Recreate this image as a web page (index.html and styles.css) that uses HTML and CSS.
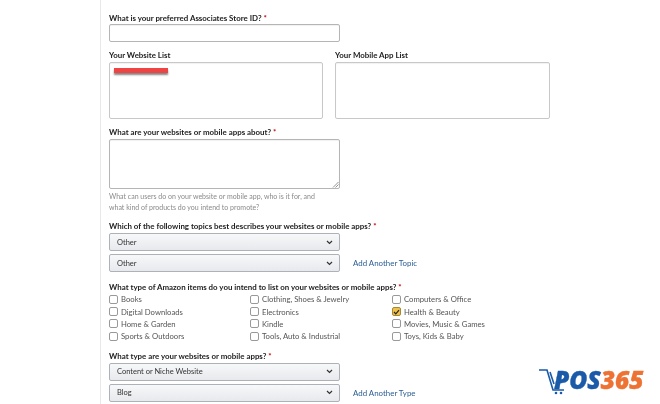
FILE: index.html
```html
<!DOCTYPE html>
<html lang="en">
<head>
  <meta charset="UTF-8" />
  <title>Associates Profile</title>
  <link rel="stylesheet" href="styles.css">
</head>
<body>
  <div class="form">

    <div class="label">What is your preferred Associates Store ID? <span class="req">*</span></div>
    <div class="box store-id"></div>

    <div class="lists">
      <div>
        <div class="label">Your Website List</div>
        <div class="box list-box"><span class="redacted"></span></div>
      </div>
      <div>
        <div class="label">Your Mobile App List</div>
        <div class="box list-box"></div>
      </div>
    </div>

    <div class="label section">What are your websites or mobile apps about? <span class="req">*</span></div>
    <div class="box about">
      <svg class="grip" width="7" height="7" viewBox="0 0 7 7"><path d="M1 6.5 6.5 1M3.5 6.5 6.5 3.5" stroke="#777" stroke-width="0.8" fill="none"/></svg>
    </div>
    <p class="hint">What can users do on your website or mobile app, who is it for, and<br>what kind of products do you intend to promote?</p>

    <div class="label section">Which of the following topics best describes your websites or mobile apps? <span class="req">*</span></div>
    <div class="select-row">
      <div class="select">Other <svg class="chev" width="7" height="5" viewBox="0 0 7 5"><path d="M1 1 3.5 3.5 6 1" stroke="#333" stroke-width="1.2" fill="none"/></svg></div>
    </div>
    <div class="select-row">
      <div class="select">Other <svg class="chev" width="7" height="5" viewBox="0 0 7 5"><path d="M1 1 3.5 3.5 6 1" stroke="#333" stroke-width="1.2" fill="none"/></svg></div>
      <a class="add" href="#">Add Another Topic</a>
    </div>

    <div class="label section-items">What type of Amazon items do you intend to list on your websites or mobile apps? <span class="req">*</span></div>
    <div class="checks">
      <label class="check"><span class="tick"></span>Books</label>
      <label class="check"><span class="tick"></span>Clothing, Shoes &amp; Jewelry</label>
      <label class="check"><span class="tick"></span>Computers &amp; Office</label>
      <label class="check"><span class="tick"></span>Digital Downloads</label>
      <label class="check"><span class="tick"></span>Electronics</label>
      <label class="check"><span class="tick on"><svg width="7" height="6" viewBox="0 0 7 6"><path d="M1 3 2.8 4.8 6 1.2" stroke="#222" stroke-width="1.2" fill="none"/></svg></span>Health &amp; Beauty</label>
      <label class="check"><span class="tick"></span>Home &amp; Garden</label>
      <label class="check"><span class="tick"></span>Kindle</label>
      <label class="check"><span class="tick"></span>Movies, Music &amp; Games</label>
      <label class="check"><span class="tick"></span>Sports &amp; Outdoors</label>
      <label class="check"><span class="tick"></span>Tools, Auto &amp; Industrial</label>
      <label class="check"><span class="tick"></span>Toys, Kids &amp; Baby</label>
    </div>

    <div class="label section">What type are your websites or mobile apps? <span class="req">*</span></div>
    <div class="select-row">
      <div class="select">Content or Niche Website <svg class="chev" width="7" height="5" viewBox="0 0 7 5"><path d="M1 1 3.5 3.5 6 1" stroke="#333" stroke-width="1.2" fill="none"/></svg></div>
    </div>
    <div class="select-row">
      <div class="select">Blog <svg class="chev" width="7" height="5" viewBox="0 0 7 5"><path d="M1 1 3.5 3.5 6 1" stroke="#333" stroke-width="1.2" fill="none"/></svg></div>
      <a class="add" href="#">Add Another Type</a>
    </div>

  </div>

  <!-- watermark -->
  <div class="logo">
    <svg width="25" height="28" viewBox="0 0 25 28"><path d="M0 3H8L14 23H25" stroke="#1a5aa8" stroke-width="1.6" fill="none"/><path d="M11 5 15 17" stroke="#1a5aa8" stroke-width="1.6" fill="none"/><circle cx="17" cy="26" r="1.3" fill="#1a5aa8"/><circle cx="22" cy="26" r="1.3" fill="#1a5aa8"/></svg>
    <span class="logo-pos">POS</span><span class="logo-num">365</span>
  </div>
</body>
</html>
```

FILE: styles.css
```css
body {
  margin: 0;
  height: 404px;
  overflow: hidden;
  background: #fff;
  font-family: "Lato", "Liberation Sans", sans-serif;
  font-size: 7.9px;
  color: #444;
  filter: blur(0.3px);
}
.form {
  margin-left: 100px;
  height: 391px;
  padding: 13px 0 0 8px;
  border-left: 1px solid #e8e8e8;
}
.label {
  height: 10px;
  line-height: 10px;
  font-weight: 700;
  color: #222;
  white-space: nowrap;
}
.req {
  color: #c40000;
}
.section {
  margin-top: 8px;
}
.section-items {
  margin-top: 10px;
}
.box {
  box-sizing: border-box;
  margin-top: 1px;
  background: #fff;
  border: 1px solid #b5b5b5;
  border-radius: 2px;
  box-shadow: inset 0 1px 1px rgba(0,0,0,0.06);
}
.store-id {
  width: 231px;
  height: 18px;
}
.lists {
  display: grid;
  grid-template-columns: 214px 215px;
  gap: 12px;
  margin-top: 8px;
}
.list-box {
  height: 57px;
  margin-top: 2px;
  padding: 5px 4px;
  border-color: #c8c8c8;
}
.redacted {
  display: block;
  width: 54px;
  height: 5px;
  background: #ee4444;
  box-shadow: 0 2px 2px rgba(50,50,50,0.6);
}
.about {
  position: relative;
  width: 231px;
  height: 50px;
  margin-top: 2px;
}
.grip {
  position: absolute;
  right: 0;
  bottom: 0;
}
.hint {
  margin: 2px 0 0;
  font-size: 7px;
  line-height: 11px;
  color: #8a8a8a;
}
.select-row {
  display: flex;
  align-items: center;
  gap: 13px;
  margin-top: 3px;
}
.label + .select-row {
  margin-top: 2px;
}
.select {
  box-sizing: border-box;
  display: flex;
  align-items: center;
  justify-content: space-between;
  width: 231px;
  height: 18px;
  padding: 0 6px 0 7px;
  font-size: 7.5px;
  background: linear-gradient(#f7f8fa, #e7e9ec);
  border: 1px solid #adb1b8;
  border-radius: 2px;
  color: #333;
}
.add {
  color: #2a5d92;
  text-decoration: none;
}
.checks {
  display: grid;
  grid-template-columns: 141px 142px 160px;
  grid-auto-rows: 12.4px;
  margin-top: 1px;
}
.check {
  display: flex;
  align-items: center;
  gap: 3px;
  font-size: 7.7px;
  color: #555;
  white-space: nowrap;
}
.tick {
  box-sizing: border-box;
  display: flex;
  align-items: center;
  justify-content: center;
  width: 9px;
  height: 9px;
  background: #fff;
  border: 1px solid #999;
  border-radius: 2px;
}
.tick.on {
  background: #f0c14b;
  border-color: #a88734;
}
.logo {
  position: absolute;
  left: 539px;
  top: 367px;
  display: flex;
  align-items: flex-start;
  font-family: "Open Sans", "Liberation Sans", sans-serif;
  font-size: 24.5px;
  line-height: 26px;
  font-weight: 800;
  font-style: italic;
  -webkit-text-stroke: 0.4px;
}
.logo svg {
  margin-right: -10px;
}
.logo-pos {
  color: #1a5aa8;
}
.logo-num {
  color: #ee7233;
}
```
